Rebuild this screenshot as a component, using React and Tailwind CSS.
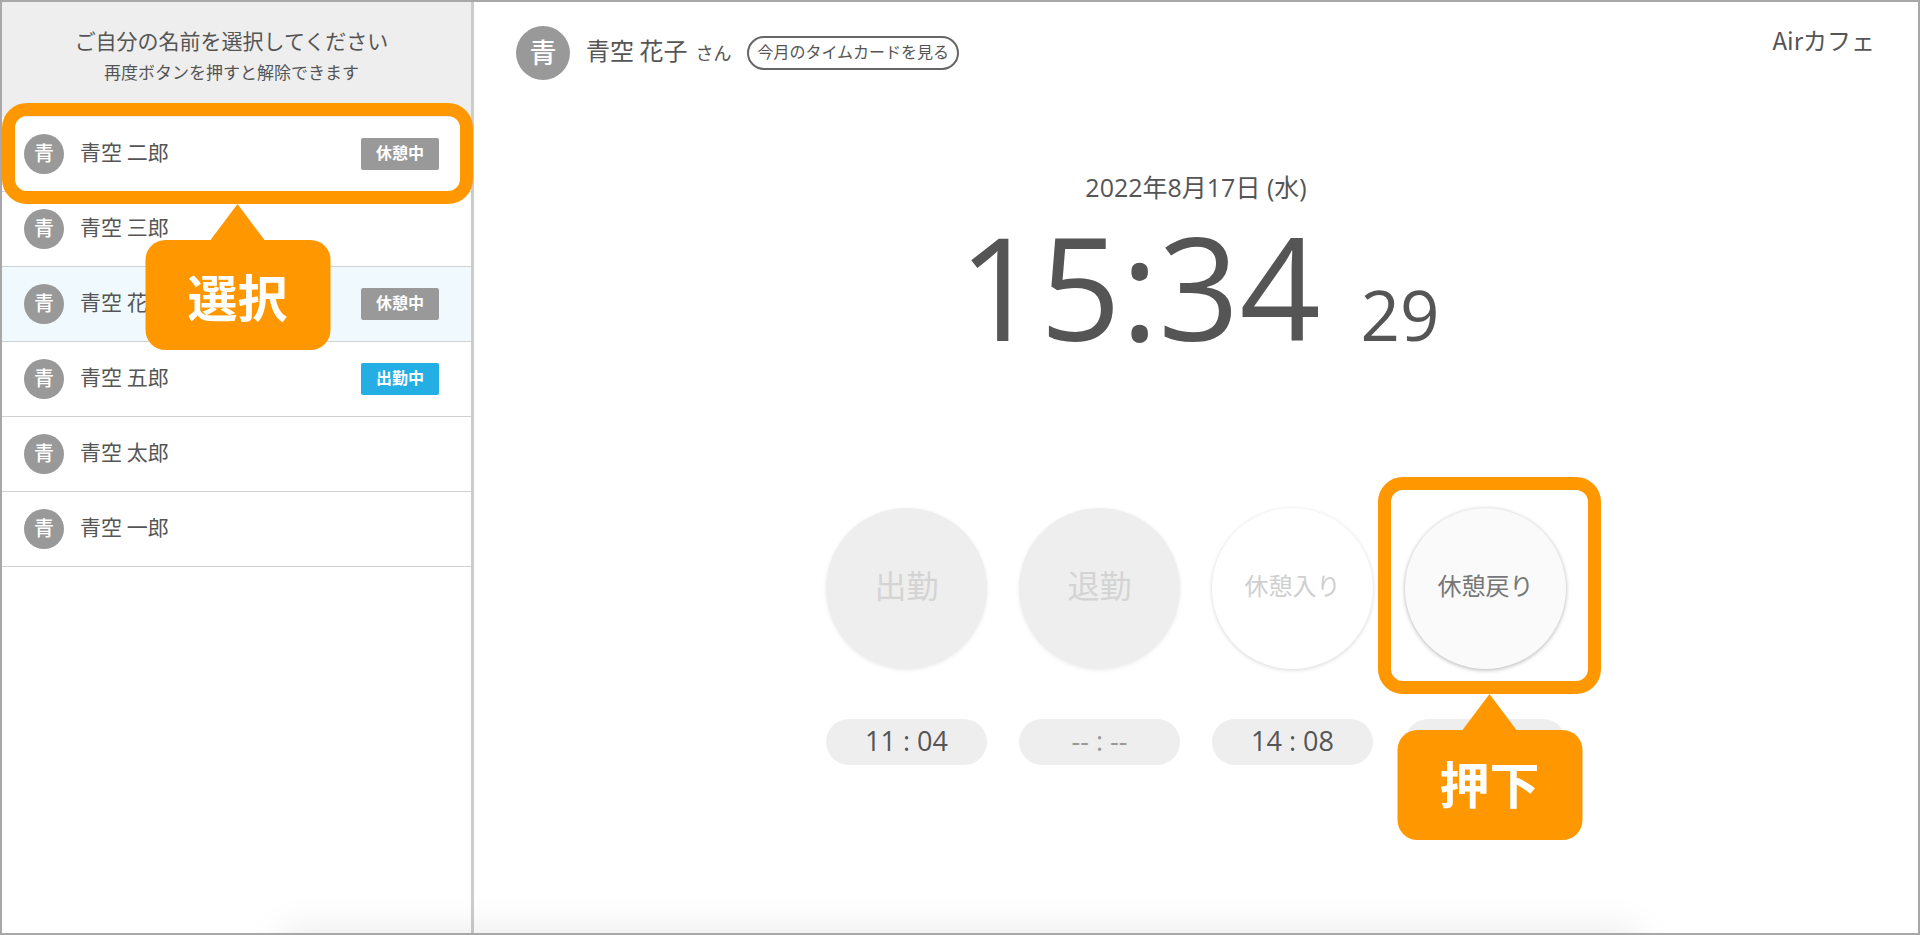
import React from 'react';

const staff = [
  { id: 1, name: '青空 二郎', status: 'break', callout: '選択' },
  { id: 2, name: '青空 三郎' },
  { id: 3, name: '青空 花子', status: 'break', selected: true },
  { id: 4, name: '青空 五郎', status: 'working' },
  { id: 5, name: '青空 太郎' },
  { id: 6, name: '青空 一郎' },
];

const statuses = {
  break: { label: '休憩中', className: 'bg-[#999999]' },
  working: { label: '出勤中', className: 'bg-[#24aee4]' },
};

const punches = [
  {
    id: 'in',
    label: '出勤',
    time: '11 : 04',
    disabled: true,
    className: 'bg-[#eeeeee] text-[32px] text-[#d4d4d4] shadow-[0_1px_4px_rgba(0,0,0,0.08)]',
  },
  {
    id: 'out',
    label: '退勤',
    time: '-- : --',
    disabled: true,
    className: 'bg-[#eeeeee] text-[32px] text-[#d4d4d4] shadow-[0_1px_4px_rgba(0,0,0,0.08)]',
  },
  {
    id: 'break-start',
    label: '休憩入り',
    time: '14 : 08',
    disabled: true,
    className: 'bg-white text-2xl text-[#cfcfcf] shadow-[0_1px_4px_rgba(0,0,0,0.16)]',
  },
  {
    id: 'break-end',
    label: '休憩戻り',
    callout: '押下',
    className: 'bg-[#fafafa] text-2xl text-[#777777] shadow-[0_1px_4px_rgba(0,0,0,0.3)]',
  },
];

const Avatar = ({ className }) => (
  <span
    className={`flex shrink-0 items-center justify-center rounded-full bg-[#999999] pb-0.5 font-medium text-white ${className}`}
  >
    青
  </span>
);

// Orange frame with a speech bubble hanging below it
const Highlight = ({ label, className }) => (
  <div
    className={`pointer-events-none absolute z-10 rounded-[25px] border-[13px] border-[#ff9800] ${className}`}
  >
    <div className="absolute top-full left-1/2 mt-[13px] flex -translate-x-1/2 flex-col items-center">
      <svg width="54" height="36" viewBox="0 0 54 36" fill="#ff9800">
        <path d="M27 0 54 36H0z" />
      </svg>
      <div className="flex h-[110px] w-[185px] items-center justify-center rounded-[20px] bg-[#ff9800] text-[50px] font-bold text-white">
        {label}
      </div>
    </div>
  </div>
);

const StaffRow = ({ person }) => {
  const status = statuses[person.status];

  return (
    <li className="relative">
      <button
        type="button"
        className={`flex h-[75px] w-full items-center border-b border-[#d0d0d0] pr-8 pl-[22px] text-left ${
          person.selected ? 'bg-[#f0f9fd]' : 'bg-white'
        }`}
      >
        <Avatar className="size-10 text-xl" />
        <span className="ml-4 flex-1 pb-1.5 text-[21px] leading-8">{person.name}</span>
        {status && (
          <span
            className={`flex h-8 w-[78px] items-center justify-center rounded-xs pb-1 text-base font-bold text-white ${status.className}`}
          >
            {status.label}
          </span>
        )}
      </button>
      {person.callout && (
        <Highlight label={person.callout} className="-top-[14px] -right-[2px] -bottom-[12px] left-0" />
      )}
    </li>
  );
};

const PunchColumn = ({ punch }) => (
  <div className="flex flex-col items-center gap-[50px]">
    <div className="relative">
      <button
        type="button"
        disabled={punch.disabled}
        className={`flex size-[161px] items-center justify-center rounded-full pb-1.5 ${punch.className}`}
      >
        {punch.label}
      </button>
      {punch.callout && (
        <Highlight label={punch.callout} className="-top-[31px] -right-[35px] -bottom-[25px] -left-[27px]" />
      )}
    </div>
    <div
      className={`flex h-[46px] w-[161px] items-center justify-center rounded-full bg-[#eeeeee] pb-0.5 text-[27px] ${
        punch.time === '-- : --' ? 'text-[#999999]' : ''
      }`}
    >
      {punch.time}
    </div>
  </div>
);

const App = () => {
  return (
    <div className="relative flex min-h-screen border-2 border-[#a8a8a8] bg-white font-['Open_Sans','Noto_Sans_CJK_JP',sans-serif] text-[#555555]">
      {/* Staff list */}
      <aside className="w-[472px] shrink-0 border-r-3 border-[#cccccc] font-['Noto_Sans_CJK_JP',sans-serif]">
        <div className="flex h-[115px] flex-col items-center bg-[#eeeeee] pt-[22px] pr-2.5">
          <h1 className="text-[21px] leading-8">ご自分の名前を選択してください</h1>
          <p className="text-[17px] leading-8">再度ボタンを押すと解除できます</p>
        </div>
        <ul>
          {staff.map((person) => (
            <StaffRow key={person.id} person={person} />
          ))}
        </ul>
      </aside>

      {/* Time clock */}
      <main className="flex-1">
        <header className="flex items-start justify-between pt-6 pr-[43px] pl-[42px] font-['Noto_Sans_CJK_JP',sans-serif]">
          <div className="flex items-center">
            <Avatar className="size-[54px] text-[27px]" />
            <p className="ml-4 pb-1.5 text-2xl">
              青空 花子<span className="ml-2 text-lg">さん</span>
            </p>
            <a
              href="#timecard"
              className="ml-4 flex h-[34px] items-center rounded-full border-2 border-[#666666] px-2 pb-1 text-base"
            >
              今月のタイムカードを見る
            </a>
          </div>
          <p className="text-2xl leading-7">Airカフェ</p>
        </header>

        <div className="mt-[89px] flex flex-col items-center">
          <p className="text-[25px] leading-9">2022年8月17日 (水)</p>
          <p className="flex items-baseline gap-10 pl-1.5 text-[142px] leading-[162px]">
            15:34
            <span className="text-[69px]">29</span>
          </p>
        </div>

        <div className="mt-[113px] flex justify-center gap-8">
          {punches.map((punch) => (
            <PunchColumn key={punch.id} punch={punch} />
          ))}
        </div>
      </main>

      {/* Soft shade along the bottom edge */}
      <div className="pointer-events-none absolute inset-x-0 bottom-0 h-12 overflow-hidden">
        <div className="absolute inset-x-70 top-full h-10 shadow-[0_0_40px_rgba(0,0,0,0.1)]" />
      </div>
    </div>
  );
};

export default App;
